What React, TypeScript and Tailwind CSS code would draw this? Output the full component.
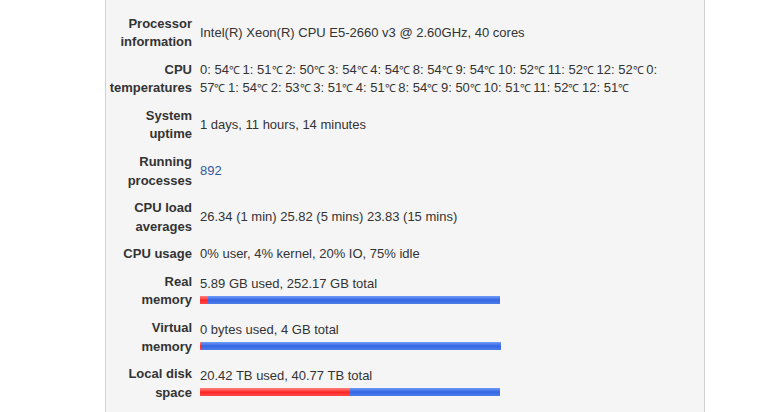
import React from 'react';

type Bar = { used: number; width: number };

type Row = {
  label: string[];
  value: React.ReactNode;
  bar?: Bar;
};

// the degree sign falls back to a full-width font; give it the narrow advance the original has
const temps = (s: string) =>
  s.split(' ').map((word, i) => {
    const deg = word.endsWith('℃');
    return (
      <React.Fragment key={i}>
        {i > 0 && ' '}
        {deg ? (
          <span className="whitespace-nowrap">
            {word.slice(0, -1)}
            <span className="inline-block w-[10px] text-[11px] leading-none">℃</span>
          </span>
        ) : (
          word
        )}
      </React.Fragment>
    );
  });

const rows: Row[] = [
  { label: ['Kernel and', 'CPU'], value: 'Linux 3.10.0-327.el7.x86_64 on x86_64' },
  { label: ['Processor', 'information'], value: 'Intel(R) Xeon(R) CPU E5-2660 v3 @ 2.60GHz, 40 cores' },
  {
    label: ['CPU', 'temperatures'],
    value: temps(
      '0: 54℃ 1: 51℃ 2: 50℃ 3: 54℃ 4: 54℃ 8: 54℃ 9: 54℃ 10: 52℃ 11: 52℃ 12: 52℃ 0: 57℃ 1: 54℃ 2: 53℃ 3: 51℃ 4: 51℃ 8: 54℃ 9: 50℃ 10: 51℃ 11: 52℃ 12: 51℃'
    ),
  },
  { label: ['System', 'uptime'], value: '1 days, 11 hours, 14 minutes' },
  {
    label: ['Running', 'processes'],
    value: <a className="text-[#34589c] no-underline">892</a>,
  },
  { label: ['CPU load', 'averages'], value: '26.34 (1 min) 25.82 (5 mins) 23.83 (15 mins)' },
  { label: ['CPU usage'], value: '0% user, 4% kernel, 20% IO, 75% idle' },
  { label: ['Real', 'memory'], value: '5.89 GB used, 252.17 GB total', bar: { used: 8, width: 300 } },
  { label: ['Virtual', 'memory'], value: '0 bytes used, 4 GB total', bar: { used: 1, width: 301 } },
  { label: ['Local disk', 'space'], value: '20.42 TB used, 40.77 TB total', bar: { used: 150, width: 300 } },
];

const UsageBar = ({ bar }: { bar: Bar }) => (
  <div className="flex h-[8px] mt-[2px] mb-[4px]" style={{ width: bar.width }}>
    <div
      className="h-full bg-gradient-to-b from-[#ff8080] via-[#ff2020] to-[#ff4a4a]"
      style={{ width: bar.used }}
    />
    <div className="h-full flex-1 bg-gradient-to-b from-[#6f9cf6] via-[#3566e4] to-[#4d7de9]" />
  </div>
);

const App = () => {
  return (
    <div className="min-h-screen bg-white overflow-hidden font-['Liberation_Sans',Arial,sans-serif] text-[13px] leading-[1.428571] text-[#333]">
      <div className="ml-[105px] w-[600px] -mt-[36px] pb-[40px] bg-[#f5f5f5] border-x border-[#d2d2d2]">
        {rows.map((row, i) => (
          <div key={row.label.join(' ')} className="flex py-[4.5px]">
            <div className="w-[90px] shrink-0 pl-[1px] pr-[4px] text-right font-bold">
              {row.label.map((line) => (
                <div key={line}>{line}</div>
              ))}
            </div>
            <div
              className={`flex-1 pl-[4px] pr-[38px] flex flex-col ${i === 0 ? 'justify-start' : 'justify-center'}`}
            >
              <div>{row.value}</div>
              {row.bar && <UsageBar bar={row.bar} />}
            </div>
          </div>
        ))}
      </div>
    </div>
  );
};

export default App;
